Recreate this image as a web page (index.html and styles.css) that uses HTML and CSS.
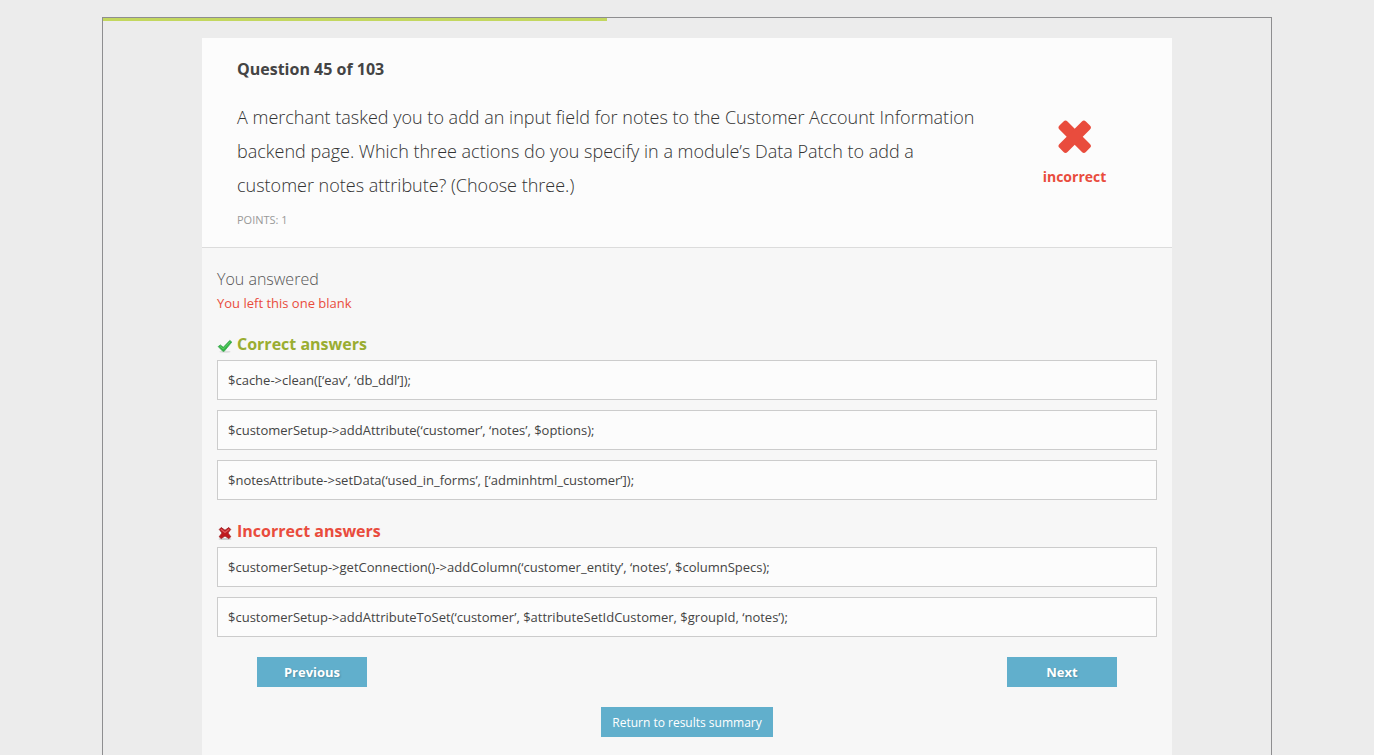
FILE: index.html
```
<!DOCTYPE html>
<html lang="en">
<head>
<meta charset="utf-8">
<meta name="viewport" content="width=device-width, initial-scale=1">
<title>Question 45 of 103</title>
<link rel="stylesheet" href="styles.css">
</head>
<body>
<div class="frame">
  <div class="progress"><div class="progress-bar" style="width: 43.15%"></div></div>
  <main class="panel">
    <header class="question">
      <h1 class="question-number">Question 45 of 103</h1>
      <div class="question-row">
        <div class="question-main">
          <p class="question-text">A merchant tasked you to add an input field for notes to the Customer Account Information backend page. Which three actions do you specify in a module’s Data Patch to add a customer notes attribute? (Choose three.)</p>
          <p class="points">POINTS: 1</p>
        </div>
        <div class="verdict">
          <svg class="verdict-icon" viewBox="0 0 34 34" aria-hidden="true"><g fill="#e94c3d"><rect x="-2" y="11" width="37.4" height="11.4" rx="2.8" transform="rotate(45 16.7 16.7)"/><rect x="-2" y="11" width="37.4" height="11.4" rx="2.8" transform="rotate(-45 16.7 16.7)"/></g></svg>
          <span>incorrect</span>
        </div>
      </div>
    </header>
    <div class="review">
      <h2 class="answered">You answered</h2>
      <p class="blank">You left this one blank</p>
      <section class="group">
        <h3 class="group-title correct">
          <svg class="mark" viewBox="0 0 16 16" aria-hidden="true"><ellipse cx="8" cy="13.8" rx="5.5" ry="1" fill="#ddd"/><path d="M1.2 8.6 3.3 6.9 6.3 9.3 12.8 2.4 14.8 4.1 7.2 13.3 5.8 13.3Z" fill="#2fb344" stroke="#3fa552" stroke-width=".8" stroke-linejoin="round"/><path d="M2.7 8.2 6.4 11 13.2 3.8" fill="none" stroke="#5fd062" stroke-width="1"/></svg>
          Correct answers
        </h3>
        <ul class="answers">
          <li>$cache-&gt;clean([‘eav’, ‘db_ddl’]);</li>
          <li>$customerSetup-&gt;addAttribute(‘customer’, ‘notes’, $options);</li>
          <li>$notesAttribute-&gt;setData(‘used_in_forms’, [‘adminhtml_customer’]);</li>
        </ul>
      </section>
      <section class="group">
        <h3 class="group-title incorrect">
          <svg class="mark" viewBox="0 0 16 16" aria-hidden="true"><ellipse cx="8" cy="14" rx="6.5" ry="1" fill="#ccc"/><path d="M4.2 2.5 8 5.3 11.8 2.5 13.7 4.4 10.9 8 13.8 11.7 11.8 13.6 8 10.9 4.2 13.6 2.2 11.7 5.1 8 2.3 4.4Z" fill="#bf181d" stroke="#a02024" stroke-width=".9" stroke-linejoin="round"/><path d="M3.9 4.2 8 7.5 12.1 4.2" fill="none" stroke="#dd5a5d" stroke-width="1.2"/></svg>
          Incorrect answers
        </h3>
        <ul class="answers">
          <li>$customerSetup-&gt;getConnection()-&gt;addColumn(‘customer_entity’, ‘notes’, $columnSpecs);</li>
          <li>$customerSetup-&gt;addAttributeToSet(‘customer’, $attributeSetIdCustomer, $groupId, ‘notes’);</li>
        </ul>
      </section>
      <nav class="pager" aria-label="Questions">
        <button class="button step" type="button">Previous</button>
        <button class="button step" type="button">Next</button>
      </nav>
      <div class="summary">
        <button class="button return" type="button">Return to results summary</button>
      </div>
    </div>
  </main>
</div>
</body>
</html>
```
FILE: styles.css
```
* {
  box-sizing: border-box;
}

body {
  display: flex;
  flex-direction: column;
  min-height: 100vh;
  margin: 0;
  padding-top: 17px;
  background: #ececec;
  color: #444;
  font-family: "Open Sans", "Noto Sans", sans-serif;
  font-size: 13px;
  line-height: 20px;
}

h1, h2, h3, p, ul {
  margin: 0;
  padding: 0;
}

.frame {
  display: flex;
  flex: 1;
  flex-direction: column;
  width: 100%;
  max-width: 1170px;
  margin: 0 auto;
  border: 1px solid #8e8e90;
  border-bottom: 0;
}

.progress {
  height: 20px;
}

.progress-bar {
  height: 3px;
  background: #c3d75f;
}

.panel {
  flex: 1;
  width: 100%;
  max-width: 970px;
  margin: 0 auto;
  background: #f7f7f7;
}

.question {
  padding: 20px 35px 17px;
  border-bottom: 1px solid #dcdcdc;
  background: #fcfcfc;
}

.question-number {
  font-size: 16px;
  font-weight: 700;
  line-height: 22px;
}

.question-row {
  display: flex;
  gap: 25px;
  padding-top: 20px;
}

.question-main {
  flex: 1;
}

.question-text {
  color: #333;
  font-size: 18px;
  font-weight: 300;
  line-height: 34px;
}

.points {
  padding-top: 8px;
  color: #999;
  font-size: 11px;
}

.verdict {
  display: flex;
  flex: 0 0 125px;
  flex-direction: column;
  align-items: center;
  gap: 13px;
  padding-top: 20px;
  color: #e94c3d;
  font-size: 14px;
  font-weight: 700;
}

.verdict-icon {
  width: 34px;
  height: 34px;
}

.review {
  padding: 20px 15px;
}

.answered {
  color: #555;
  font-size: 16px;
  font-weight: 300;
  line-height: 22px;
}

.blank {
  padding-top: 4px;
  color: #e94c3d;
  line-height: 19px;
}

.group {
  padding-top: 20px;
}

.group-title {
  display: flex;
  align-items: center;
  gap: 4px;
  padding-bottom: 5px;
  font-size: 16px;
  font-weight: 700;
  line-height: 22px;
}

.mark {
  width: 16px;
  height: 16px;
  margin-top: 4px;
}

.correct {
  color: #9aad31;
}

.incorrect {
  color: #e94c3d;
}

.answers {
  display: grid;
  gap: 10px;
  list-style: none;
}

.answers li {
  padding: 9px 10px;
  border: 1px solid #ccc;
  background: #fcfcfc;
}

.pager {
  display: flex;
  justify-content: space-between;
  padding: 20px 40px;
}

.button {
  height: 30px;
  border: 0;
  background: #61afcc;
  color: #fff;
  font-family: inherit;
  cursor: pointer;
}

.step {
  width: 110px;
  font-size: 13px;
  font-weight: 700;
  text-shadow: 1px 1px 2px rgba(0, 0, 0, 0.2);
}

.summary {
  text-align: center;
}

.return {
  padding: 0 11px;
  font-size: 12px;
}
```
